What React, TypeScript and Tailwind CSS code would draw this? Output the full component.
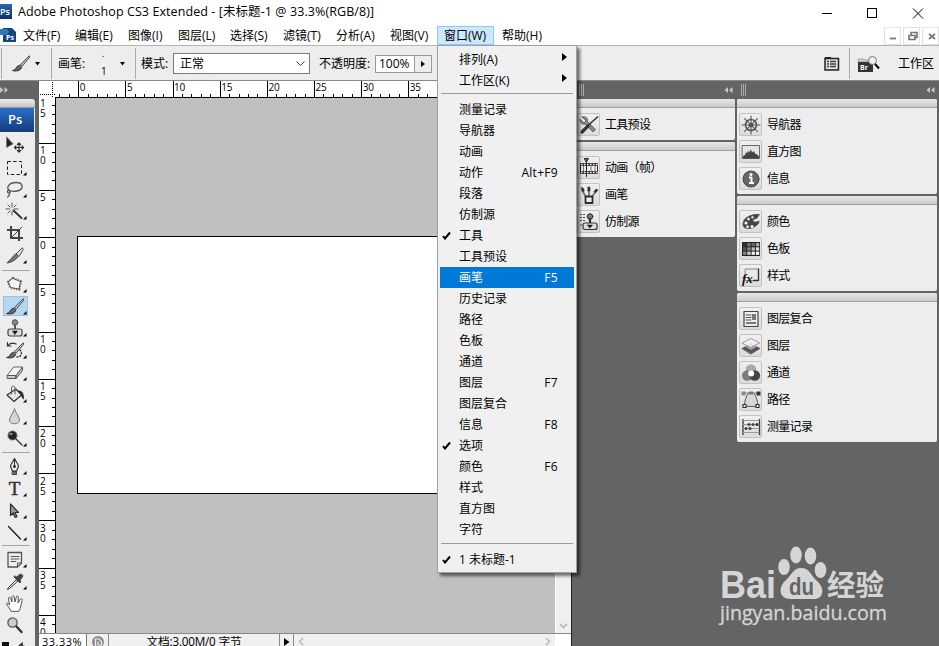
import type { FC, ReactNode } from "react";

type BoxProps = { children: ReactNode };

const Icon: FC<BoxProps> = ({ children }) => (
  <svg width="22" height="22" viewBox="0 0 22 22" fill="none" stroke="#2c2c2c" strokeLinecap="round" strokeLinejoin="round" className="block shrink-0">
    {children}
  </svg>
);

const brush = (
  <>
    <path d="M19 3l-8.500 8.500 1.700 1.700L19.500 4.500z" fill="#bbb" stroke="#444" strokeWidth=".9" />
    <path d="M9.500 12.300c-2 .3-2.700 1.500-3.700 3-.8 1.500-1.800 1.800-3.300 2.200 3 1 8.300.5 9.200-3z" fill="#666" stroke="#222" strokeWidth=".9" />
  </>
);

const tools: { name: string; corner?: boolean; icon: ReactNode }[] = [
  { name: "move", icon: <><path d="M2.500 2v10.500L9 9z" fill="#222" stroke="#777" strokeWidth=".7" /><path d="M15 8v9M10.500 12.500h9M13.500 9.500L15 8l1.500 1.500M13.500 15.500L15 17l1.500-1.500M12 11l-1.500 1.500L12 14M18 11l1.500 1.500L18 14" strokeWidth="1.200" /></> },
  { name: "marquee", corner: true, icon: <rect x="3.500" y="4.500" width="14" height="13" strokeDasharray="3.500 2.200" strokeLinecap="butt" stroke="#222" /> },
  { name: "lasso", corner: true, icon: <path d="M6 12C1 9 5 3.500 12 3.500c8 0 8 7 1 8.500-3.500.7-7-.3-8-1-2 0-2 3 0 3.200 2 .2 1-2.500 0-3M5 14.200c1 1 0 3-1.500 3.800" strokeWidth="1.300" stroke="#555" /> },
  { name: "wand", corner: true, icon: <><path d="M9.500 9.500l8 7.500" strokeWidth="1.900" stroke="#333" /><path d="M8 2v4M8 10.500v3.500M2 8h4M10 8h4M3.800 3.800L6 6M12.200 3.800L10 6M3.800 12.200L6 10" stroke="#555" /></> },
  { name: "crop", icon: <><path d="M7 3v12h12M3 7h12v11" strokeWidth="2" stroke="#444" strokeLinecap="butt" /><path d="M8 14L18 4" strokeWidth=".9" /></> },
  { name: "slice", corner: true, icon: <><path d="M18 3l-6 6 3 2.500L19 5z" fill="#ddd" strokeWidth=".8" /><path d="M11.500 9L3 18c4-.5 8-2.500 11-6z" fill="#777" strokeWidth=".8" /></> },
  { name: "patch", corner: true, icon: <><path d="M9 4.500l7.500 3L15 15l-8.500-1.500L4.500 8z" strokeWidth="3" strokeDasharray="1 1.500" stroke="#555" strokeLinecap="butt" /><path d="M9 4.500l7.500 3L15 15l-8.500-1.500L4.500 8z" strokeWidth="1" fill="#f5f5f5" stroke="#555" /></> },
  { name: "brush", corner: true, icon: brush },
  { name: "stamp", corner: true, icon: <><circle cx="11" cy="4.500" r="2.800" fill="#888" stroke="#555" /><path d="M11 7.500v4" strokeWidth="2" stroke="#555" /><rect x="4" y="11" width="14" height="7" rx="2" fill="#ddd" stroke="#444" strokeWidth="1.200" /><path d="M8.500 13h5L11 16.500z" fill="#111" strokeWidth=".5" /></> },
  { name: "history", corner: true, icon: <>{brush}<path d="M12 4C9 2.500 6 3 4 5.500M3.500 2.500V6H7" strokeWidth="1.200" /><path d="M16 10c3 3 1 7-3 7" strokeDasharray="1 2" strokeWidth="1.400" /></> },
  { name: "eraser", corner: true, icon: <><path d="M10 5h8.500L12 13.500H3.500z" fill="#f5f5f5" stroke="#666" /><path d="M3.500 13.500H12v3H3.500zM12 16.500l6.500-8V5L12 13.500z" fill="#ccc" stroke="#555" /></> },
  { name: "bucket", corner: true, icon: <><path d="M3 11l9-6 5.500 6-7.500 6.500z" fill="#e5e5e5" stroke="#333" strokeWidth="1.200" /><path d="M7.500 10V4C7.500 1.500 11 1.500 11 4v6" stroke="#555" /><path d="M14 7c4-.5 5.500 2 5.500 8-1.500-1-2-3-2-5z" fill="#222" strokeWidth=".8" /></> },
  { name: "blur", corner: true, icon: <path d="M10.500 3C9 7.500 5.500 11 5.500 14c0 5 10 5 10 0 0-3-3.500-6.500-5-11z" fill="#d5d5d5" stroke="#777" /> },
  { name: "dodge", corner: true, icon: <><circle cx="8.500" cy="7.500" r="4.500" fill="#222" stroke="#666" /><ellipse cx="7" cy="6" rx="1.700" ry="1.200" fill="#888" stroke="none" /><path d="M12 11l6 6" strokeWidth="1.300" /></> },
  { name: "pen", corner: true, icon: <><path d="M10.500 2.500C9 6 6.500 8 6.500 10.500L8.500 15h4l2-4.500c0-2.500-2.500-4.500-4-8z" fill="#eee" strokeWidth="1.100" /><path d="M10.500 3v7" /><circle cx="10.500" cy="10.500" r="1.100" fill="#222" /><rect x="8.500" y="15.500" width="4" height="3" fill="#666" strokeWidth=".8" /></> },
  { name: "type", corner: true, icon: <text x="10.500" y="17" textAnchor="middle" fontSize="19" fill="#333" stroke="#333" strokeWidth=".5" fontFamily="Liberation Serif, serif">T</text> },
  { name: "select", corner: true, icon: <path d="M6.500 4v11.500l2.700-2.500 2 4.500 1.800-.8-2-4.200h3.500z" fill="#999" strokeWidth="1.200" /> },
  { name: "line", corner: true, icon: <path d="M4.500 4.500l12 12.500" strokeWidth="1.200" stroke="#111" /> },
  { name: "note", corner: true, icon: <><path d="M4 3.500h13.500V14l-4 4H4z" fill="#eee" stroke="#555" strokeWidth="1.300" /><path d="M7 7.500h8M7 10h8M7 12.500h5M13.500 18v-4h4" stroke="#555" /></> },
  { name: "eyedropper", corner: true, icon: <><path d="M12 9l-7.500 7.500-1 2 2-1L13.500 10.500z" fill="#eee" strokeWidth="1" /><path d="M10 6l6 6 1-2-1-1 2.500-3c1-2-1-3.500-3-2.500L12.500 6l-1-1z" fill="#444" strokeWidth=".7" /></> },
  { name: "hand", icon: <path d="M7 18c-1-2-3-5-4.500-7 0-1.500 1.700-1 3 1L4.500 5c.6-1.500 1.900-.6 2.200.6L8 9V3.500c.8-1.500 2-.6 2.200.5L11 9l1.500-5.500c1-1 2-.3 1.800 1L14 10l2.500-4c1.200-.8 2 .2 1.700 1.200C17 11 17 15 15 18z" fill="#fff" stroke="#555" /> },
  { name: "zoom", icon: <><circle cx="8.500" cy="7.500" r="4.600" fill="#ccc" stroke="#555" strokeWidth="1.300" /><path d="M12.500 11.500l5 5.500" strokeWidth="2.400" stroke="#333" /></> },
];

const separators: Record<string, string> = {
  patch: "h-[7px] pt-[4px] pl-[2px]",
  pen: "h-[6px] pt-[3px] pl-[2px]",
  note: "h-[5px] pt-[2px] pl-[2px]",
};

const ToolBar = () => (
  <div className="flex h-full w-[39px] shrink-0 flex-col overflow-hidden bg-[#646464]">
    <div className="flex h-[18px] items-center">
      <svg width="10" height="8" className="block"><path d="M0 1l3.500 3L0 7zM4.500 1L8 4 4.500 7z" fill="#c4c4c4" /></svg>
    </div>
    <div className="h-[548px] w-[35px] overflow-hidden rounded-tr-sm bg-[#ededed]">
      <div className="h-[9px] border-b border-[#999] bg-linear-to-b from-[#eee] to-[#c4c4c4]" />
      <div className="flex h-[24px] w-[34px] items-center bg-linear-to-b from-[#2a70c8] to-[#173a7c] pl-[8px] text-[13px] font-semibold text-white">Ps</div>
      <div className="h-[2px]" />
      {tools.map((tool) => (
        <div key={tool.name}>
          {separators[tool.name] && (
            <div className={separators[tool.name]}>
              <div className="h-px w-[28px] bg-[#a4a4a4]" />
            </div>
          )}
          <div className="relative flex h-[22px] items-center pl-[3px]">
            <div className={tool.name === "brush" ? "h-[20px] w-[25px] bg-[#b5d7f3] outline outline-[#9dbfe0] -outline-offset-1" : "h-[20px] w-[25px]"}>
              <div className="ml-px"><Icon>{tool.icon}</Icon></div>
            </div>
            {tool.corner && (
              <svg width="4" height="4" className="absolute bottom-[2px] left-[23px]"><path d="M3.500 0v3.500H0z" fill="#000" /></svg>
            )}
          </div>
        </div>
      ))}
      <svg width="34" height="12" className="mt-[6px] block"><path d="M2 0h7v7H2z" fill="#111" /><path d="M7 4h5v4H7z" fill="#555" /><path d="M19 4l3-2.500V4c3 0 4 1 4 4" fill="none" stroke="#222" strokeWidth="1.500" /></svg>
    </div>
  </div>
);

const hLabels = [0, 5, 10, 15, 20, 25, 30, 35];
const vLabels = ["15", "10", "5", "0", "5", "10", "15", "20", "25", "30", "35", "40"];

const TopRuler = () => (
  <svg width="532" height="17" className="block shrink-0 bg-white" shapeRendering="crispEdges">
    <path d="M13.500 1v16M1 13.500h16" stroke="#000" strokeDasharray="1 1" />
    <path d="M16 16.500h516" stroke="#000" />
    {Array.from({ length: 44 }, (_, i) => {
      const x = Math.round(20.400 + i * 9.430) + 0.5;
      return <path key={i} d={`M${x} ${i % 5 === 2 ? 0 : 13}V17`} stroke="#000" />;
    })}
    {hLabels.map((n, i) => (
      <text key={n} x={40.800 + i * 47.150} y="10" fontSize="10" fill="#000" letterSpacing="-0.200">{n}</text>
    ))}
  </svg>
);

const SideRuler = () => (
  <svg width="17" height="535" className="block shrink-0 bg-white" shapeRendering="crispEdges">
    <path d="M16.500 0v535" stroke="#000" />
    {Array.from({ length: 57 }, (_, i) => {
      const y = Math.round(-2.500 + i * 9.440) + 0.5;
      return <path key={i} d={`M${i % 5 === 0 ? 0 : 13} ${y}H17`} stroke="#000" />;
    })}
    {vLabels.map((label, i) =>
      label.split("").map((c, j) => (
        <text key={`${i}-${j}`} x="1" y={9 + i * 47.200 + j * 10} fontSize="10" fill="#000">{c}</text>
      ))
    )}
  </svg>
);

const Document = () => (
  <div className="flex w-[532px] shrink-0 flex-col bg-[#c0c0c0]">
    <TopRuler />
    <div className="flex h-[535px]">
      <SideRuler />
      <div className="flex-1 overflow-hidden pt-[138px] pl-[21px]">
        <div className="h-[258px] w-[600px] border border-black bg-white" />
      </div>
      <div className="flex w-[16px] items-end justify-center border-l border-white bg-[#f0f0f0] pb-[4px]">
        <svg width="9" height="6"><path d="M1 1l3.500 3.500L8 1" fill="none" stroke="#bbb" strokeWidth="1.800" /></svg>
      </div>
    </div>
    <div className="flex h-[16px] items-center border-t border-[#888] bg-[#f0f0f0]">
      <div className="flex h-full w-[48px] items-center border-r border-[#777] bg-white pt-[2px] pl-[3px] text-[11px] tracking-[0.500px]">33.33%</div>
      <div className="flex h-full w-[22px] items-center justify-center border-r border-[#888]">
        <svg width="14" height="14" viewBox="0 0 14 14"><circle cx="7" cy="7" r="6" fill="#8c8c8c" /><path d="M4.500 11V4h3.500l2.500 2.500V10H7V6.500" fill="none" stroke="#eee" strokeWidth="1.200" /></svg>
      </div>
      <div className="flex h-full w-[171px] items-center justify-center border-r border-[#888] text-[11.700px] tracking-[-0.200px] whitespace-pre">文档:3.00M/0 字节</div>
      <div className="flex h-full w-[14px] items-center justify-center border-r border-[#888]">
        <svg width="6" height="8"><path d="M0 0l5.500 4L0 8z" fill="#000" /></svg>
      </div>
      <div className="flex flex-1 items-center justify-between px-[4px]">
        <svg width="6" height="9"><path d="M5 1L1.500 4.500 5 8" fill="none" stroke="#bbb" strokeWidth="1.600" /></svg>
        <svg width="6" height="9"><path d="M1 1l3.500 3.500L1 8" fill="none" stroke="#bbb" strokeWidth="1.600" /></svg>
      </div>
      <div className="h-full w-[16px] bg-white" />
    </div>
  </div>
);

const panelIcons: Record<string, ReactNode> = {
  工具预设: <><path d="M4 3l4 4-2 2-4-4c0 4 2 6 5 5l8 8 2.500-2.500-8-8C10 4 8 2 4 3z" fill="#888" stroke="#555" strokeWidth=".8" /><path d="M19.500 3L11 10.500" strokeWidth="1.500" /><path d="M10 12l-6 6" strokeWidth="3.200" stroke="#333" /></>,
  "动画（帧）": <><path d="M2 6h18v11H2z" fill="#333" stroke="none" /><path d="M3 9h16v5H3z" fill="#eee" stroke="none" /><path d="M3 7.500h17M3 15.500h17" stroke="#fff" strokeWidth="1.400" strokeDasharray="1.500 1.500" strokeLinecap="butt" /><path d="M5.500 9v5M13 9v5M17 9v5" stroke="#777" /><path d="M8.500 2.500v17" stroke="#222" /><path d="M6.500 1.500h4L8.500 5z" fill="#555" /></>,
  画笔: <><path d="M8 13L4.500 7M11 13V6M14 13l4-6" strokeWidth="1.800" stroke="#777" /><path d="M3.500 3.500c2.500 0 3 2.500 2.500 4L4 7zM10 3h2v4h-2zM16 7.500l2-2.500 2 1-2 2.500z" fill="#333" strokeWidth=".6" /><path d="M7.500 12.500h7V19h-7z" fill="#eee" strokeWidth="1.800" /></>,
  仿制源: <><path d="M2 3.500h6M2 6.500h6M2 9.500h6M2 14h2" stroke="#555" strokeDasharray="2 1" strokeLinecap="butt" /><circle cx="12" cy="5.500" r="2.800" fill="#777" /><path d="M12 8v4" strokeWidth="2.200" /><rect x="5" y="12" width="14" height="6.500" rx="2" fill="#ddd" stroke="#333" strokeWidth="1.200" /><path d="M9.500 14h5L12 17z" fill="#111" strokeWidth=".5" /></>,
  导航器: <><circle cx="11" cy="11" r="5.500" stroke="#555" strokeWidth="1.600" /><circle cx="11" cy="11" r="1.800" fill="#444" stroke="#444" /><path d="M11 2v18M2 11h18M4.600 4.600l12.800 12.800M17.400 4.600L4.600 17.400" stroke="#555" strokeWidth="1.100" /></>,
  直方图: <><rect x="2.500" y="4.500" width="17" height="13" fill="#e5e5e5" stroke="#666" /><path d="M3 17.500V15l2-1 1-3 1 1.500 1-3 1 2 2-3 1 3 2-1.500 1 2.500 2 1 2 2v2z" fill="#444" stroke="none" /></>,
  信息: <><circle cx="11" cy="11" r="8" fill="#666" stroke="#444" /><path d="M9 9.500h2.500V15M9 15h5" stroke="#fff" strokeWidth="2" strokeLinecap="butt" /><circle cx="11" cy="6.500" r="1.500" fill="#fff" stroke="none" /></>,
  颜色: <><path d="M19 3.500C16 2.500 3 5 3 13c0 6 8 5 11 3 3-2 5-3 5-6-2 1-4 2-6 0-1-2 3-2 4-3z" fill="#444" stroke="#555" /><circle cx="6" cy="12" r="1.500" fill="#fff" stroke="none" /><circle cx="7.500" cy="15.700" r="1.500" fill="#ddd" stroke="none" /><circle cx="8.500" cy="8" r="1.500" fill="#ddd" stroke="none" /><circle cx="12" cy="15.500" r="1.500" fill="#fff" stroke="none" /><circle cx="12.500" cy="6.200" r="1.200" fill="#ddd" stroke="none" /></>,
  色板: <><rect x="2" y="4" width="18" height="14" fill="#222" stroke="none" />{[0, 1, 2, 3, 4, 5, 6, 7, 8, 9, 10, 11].map((n) => <rect key={n} x={3 + (n % 4) * 4.300} y={5 + Math.floor(n / 4) * 4.300} width="3.300" height="3.300" stroke="none" fill={["#333", "#777", "#666", "#aaa", "#555", "#888", "#bbb", "#ddd", "#888", "#ccc", "#eee", "#fff"][n]} />)}</>,
  样式: <><path d="M5.500 4h13v11.500h-13z" fill="#e9e9e9" stroke="#888" /><path d="M18.500 4v11.500h-5" stroke="#333" strokeWidth="1.400" /><text x="2" y="18" fontSize="13" fontWeight="bold" fontStyle="italic" fontFamily="Liberation Serif, serif" fill="#111" stroke="none">fx</text></>,
  图层复合: <><rect x="4" y="3.500" width="14" height="15" fill="#eee" stroke="#444" strokeWidth="1.200" /><path d="M6 7h5M6 9.500h5M6 12h5" stroke="#555" /><path d="M12 6h4v6h-4zM6 14h10v2H6z" fill="#777" stroke="none" /></>,
  图层: <><path d="M2 13.500l9-5 9 5-9 5.500z" fill="#555" stroke="#444" strokeWidth=".5" /><path d="M5 11.500l6-3.500 6 3.500-6 3.500z" fill="#aaa" stroke="none" /><path d="M2.500 8L11 3.500 19.500 8 11 12.500z" fill="#f5f5f5" fillOpacity=".75" stroke="#888" strokeWidth=".8" /></>,
  通道: <><circle cx="11" cy="7.500" r="5.300" fill="#aaa" stroke="none" /><circle cx="7.300" cy="13.500" r="5.300" fill="#7c7c7c" stroke="none" /><circle cx="14.800" cy="13.500" r="5.300" fill="#444" stroke="none" /><circle cx="11.200" cy="11.500" r="3" fill="#fff" stroke="none" /></>,
  路径: <><path d="M4 17C5 12 6 7 8.500 4h5c3 3 4 8 4.500 13z" fill="#d8d8d8" stroke="#555" /><path d="M3 4h16" stroke="#888" /><path d="M1.500 2.500h4v4h-4z" fill="#888" stroke="none" /><path d="M9 2.500h4v3H9z" fill="#777" stroke="none" /><path d="M16.500 2.500h4v4h-4z" fill="#333" stroke="none" /><path d="M3 15.500h3v3H3zM16 15.500h3v3h-3z" fill="#fff" strokeWidth="1.200" /></>,
  测量记录: <><path d="M3 3v16M19.500 3v16" stroke="#333" strokeWidth="1.300" strokeLinecap="butt" /><path d="M3 4.500h16M3 8.500h16M3 12.500h16M3 16.500h16" stroke="#999" /><circle cx="9" cy="8.500" r="1.500" fill="#444" stroke="none" /><circle cx="13" cy="8.500" r="1.500" fill="#444" stroke="none" /><circle cx="17" cy="8.500" r="1.500" fill="#333" stroke="none" /><circle cx="6" cy="12.500" r="1.500" fill="#444" stroke="none" /><circle cx="10" cy="12.500" r="1.500" fill="#444" stroke="none" /></>,
};

const Panel: FC<{ items: string[]; className?: string }> = ({ items, className }) => (
  <div className={`overflow-hidden rounded-xs bg-[#ededed] ${className}`}>
    <div className="h-[9px] border-b border-[#a0a0a0] bg-linear-to-b from-[#e8e8e8] to-[#cacaca]" />
    <div className="flex flex-col gap-[4px] pt-[5px] pl-[2px]">
      {items.map((item) => (
        <div key={item} className="flex h-[23px] items-center gap-[5px]">
          <div className="flex size-[23px] shrink-0 items-center justify-center rounded-xs border border-[#c2c2c2] bg-linear-to-b from-[#f0f0f0] to-[#dcdcdc]">
            <Icon>{panelIcons[item]}</Icon>
          </div>
          <span className="text-[12px] tracking-[-0.7px] whitespace-nowrap">{item}</span>
        </div>
      ))}
    </div>
  </div>
);

const DockHeader = () => (
  <div className="flex h-[18px] items-center justify-between bg-[#646464] pr-[2px] pl-[4px]">
    <div className="flex gap-px">
      <div className="h-[12px] w-px bg-[#aaa]" />
      <div className="h-[12px] w-px bg-[#aaa]" />
      <div className="h-[12px] w-px bg-[#aaa]" />
    </div>
    <svg width="9" height="8"><path d="M4 1L.5 4 4 7zM8.500 1L5 4l3.500 3z" fill="#c8c8c8" /></svg>
  </div>
);

const Watermark = () => (
  <svg width="180" height="90" className="absolute top-[542px] left-[714px]" fill="#d5d5d5">
    <text x="6" y="56" fontSize="38" fontWeight="bold" fontFamily="Liberation Sans, sans-serif" textLength="56" lengthAdjust="spacingAndGlyphs">Bai</text>
    <ellipse cx="70" cy="25" rx="5.800" ry="8" />
    <ellipse cx="82" cy="13" rx="5.800" ry="8.500" />
    <ellipse cx="96.500" cy="14" rx="5.800" ry="8.500" />
    <ellipse cx="106.500" cy="28" rx="5.800" ry="8" />
    <path d="M87 26c9 0 10 8 16 13 9 8 6 19-4 18H77c-12 0-13-11-6-18 7-6 8-13 16-13z" />
    <text x="75" y="53" fontSize="23" fontWeight="bold" fill="#646464" fontFamily="Liberation Sans, sans-serif" textLength="25" lengthAdjust="spacingAndGlyphs">du</text>
    <text x="113" y="54" fontSize="29" fontWeight="bold" fontFamily="Noto Sans CJK SC, sans-serif" textLength="57" lengthAdjust="spacingAndGlyphs">经验</text>
    <text x="6" y="78" fontSize="20" stroke="#d5d5d5" strokeWidth=".3" fontFamily="Open Sans, sans-serif" textLength="167" lengthAdjust="spacingAndGlyphs">jingyan.baidu.com</text>
  </svg>
);

const windowMenu = [
  { label: "测量记录" },
  { label: "导航器" },
  { label: "动画" },
  { label: "动作", hotkey: "Alt+F9" },
  { label: "段落" },
  { label: "仿制源" },
  { label: "工具", checked: true },
  { label: "工具预设" },
  { label: "画笔", hotkey: "F5", active: true },
  { label: "历史记录" },
  { label: "路径" },
  { label: "色板" },
  { label: "通道" },
  { label: "图层", hotkey: "F7" },
  { label: "图层复合" },
  { label: "信息", hotkey: "F8" },
  { label: "选项", checked: true },
  { label: "颜色", hotkey: "F6" },
  { label: "样式" },
  { label: "直方图" },
  { label: "字符" },
];

type RowProps = { label: string; hotkey?: string; checked?: boolean; active?: boolean; sub?: boolean };

const MenuRow: FC<RowProps> = ({ label, hotkey, checked, active, sub }) => (
  <div className={`flex h-[21px] items-center pr-[16px] text-[12px] ${active ? "bg-[#0078d7] text-white" : ""}`}>
    <div className="w-[19px] shrink-0 pl-[2px]">
      {checked && <svg width="9" height="9"><path d="M1 5l2 2.500L8 1.500" fill="none" stroke="#000" strokeWidth="2" /></svg>}
    </div>
    <span className="whitespace-nowrap">{label}</span>
    <span className="ml-auto tracking-[0.300px]">{hotkey}</span>
    {sub && <svg width="5" height="8" className="-mr-[9px] mb-[6px]"><path d="M0 0l5 4-5 4z" fill="#000" /></svg>}
  </div>
);

const WindowMenu = () => (
  <div className="absolute top-[45px] left-[437px] h-[528px] w-[140px] border border-[#a0a0a0] bg-[#f0f0f0] px-[2px] pt-[3px] shadow-[3px_3px_3px_rgba(0,0,0,0.55)]">
    <MenuRow label="排列(A)" sub />
    <MenuRow label="工作区(K)" sub />
    <div className="mx-[1px] mt-[2px] mb-[5px] h-px bg-[#9a9a9a]" />
    {windowMenu.map((row) => (
      <MenuRow key={row.label} {...row} />
    ))}
    <div className="mx-[1px] mt-[3px] mb-[5px] h-px bg-[#9a9a9a]" />
    <MenuRow label="1 未标题-1" checked />
  </div>
);

const TitleBar = () => (
  <div className="flex h-[25px] items-center bg-white">
    <div className="mb-[2px] flex h-[15px] w-[12px] items-center bg-linear-to-b from-[#2b67b5] to-[#0d2f66] text-[9px] font-semibold text-white">Ps</div>
    <div className="ml-[6px] text-[12.500px] tracking-[0.080px] whitespace-nowrap">Adobe Photoshop CS3 Extended - [未标题-1 @ 33.3%(RGB/8)]</div>
    <svg width="117" height="24" className="ml-auto block" fill="none" stroke="#000" shapeRendering="crispEdges">
      <path d="M0 12.500h10M45.500 7.500h9v9h-9z" />
      <path d="M91 7.500l10 10M101 7.500l-10 10" shapeRendering="auto" />
    </svg>
  </div>
);

const menus = [
  { label: "文件(F)", width: "w-[52px]" },
  { label: "编辑(E)", width: "w-[53px]" },
  { label: "图像(I)", width: "w-[50px]" },
  { label: "图层(L)", width: "w-[52px]" },
  { label: "选择(S)", width: "w-[53px]" },
  { label: "滤镜(T)", width: "w-[53px]" },
  { label: "分析(A)", width: "w-[54px]" },
  { label: "视图(V)", width: "w-[47px]" },
  { label: "窗口(W)", width: "w-[57px] h-[19px] pl-[6px] border border-[#90c8f6] bg-[#cce8ff]" },
  { label: "帮助(H)", width: "w-[60px] pl-[8px]" },
];

const MenuBar = () => (
  <div className="flex h-[20px] items-center bg-white pt-px text-[12px]">
    <svg width="17" height="17" className="mr-[6px]">
      <path d="M3 1h9l4 4v10H3z" fill="#174481" />
      <path d="M0 2h7l2 3-2 3H0z" fill="#2f77c3" />
      <text x="6" y="13" fontSize="7" fontWeight="bold" fill="#fff">Ps</text>
    </svg>
    {menus.map((menu) => (
      <div key={menu.label} className={`flex shrink-0 items-center whitespace-nowrap ${menu.width}`}>{menu.label}</div>
    ))}
    <div className="mt-px ml-auto flex gap-[2px]">
      {["M5 10.500h6", "M5 7.500h6v4H5zM7 7V4.500h6v5h-2", "M6 6l6 5M12 6l-6 5"].map((d) => (
        <svg key={d} width="17" height="18" className="border border-[#e2e2e2]"><path d={d} fill="none" stroke="#6d7985" strokeWidth="1.700" /></svg>
      ))}
    </div>
  </div>
);

const Divider = () => <div className="h-[31px] w-px bg-[#aaa]" />;
const Caret = () => <svg width="5" height="4" className="block"><path d="M0 0h5L2.500 3.500z" fill="#000" /></svg>;

const OptionsBar = () => (
  <div className="flex h-[36px] items-center border-t border-b border-t-[#b5b5b5] border-b-[#8a8a8a] bg-[#ededed] pt-px text-[12px]">
    <div className="w-px" />
    <Divider />
    <div className="flex w-[49px] items-center gap-[3px] pl-[8px]"><Icon>{brush}</Icon><Caret /></div>
    <Divider />
    <span className="ml-[6px] w-[43px]">画笔:</span>
    <div className="flex h-[24px] w-[19px] flex-col justify-between leading-none">
      <span className="pl-[1px] text-[9px] leading-[4px]">.</span>
      <span className="text-[10px] leading-[9px]">1</span>
    </div>
    <Caret />
    <div className="ml-[10px]"><Divider /></div>
    <span className="ml-[5px] w-[32px] whitespace-nowrap">模式:</span>
    <div className="flex h-[21px] w-[137px] items-center justify-between border border-[#7a7a7a] bg-white pr-[4px] pl-[6px]">
      正常
      <svg width="9" height="6"><path d="M.5 .5l4 4 4-4" fill="none" stroke="#444" /></svg>
    </div>
    <span className="ml-[9px] w-[56px] whitespace-nowrap">不透明度:</span>
    <div className="flex h-[18px] w-[57px] items-center border border-[#999] bg-white pl-[3px]">
      <span className="w-[35px]">100%</span>
      <div className="flex h-full flex-1 items-center justify-center border-l border-[#999] bg-[#ededed]">
        <svg width="4" height="6"><path d="M0 0l4 3-4 3z" fill="#000" /></svg>
      </div>
    </div>
    <div className="ml-auto flex items-center">
      <svg width="16" height="16" className="mr-[9px] block">
        <path d="M1 2.500h13.500V14H1z" fill="#ddd" stroke="#222" strokeWidth="1.500" />
        <path d="M1 1h6v2H1z" fill="#222" />
        <path d="M3 5.500h2M3 8h2M3 10.500h2M6 5.500h6M6 8h6M6 10.500h6" stroke="#444" strokeWidth="1.300" />
      </svg>
      <Divider />
      <svg width="23" height="18" className="ml-[7px] block">
        <path d="M1 4h6l1 1h8v2H1z" fill="#ccc" stroke="#888" strokeWidth=".6" />
        <path d="M1 7h15v10H1z" fill="#333" />
        <text x="3" y="15" fontSize="7" fontWeight="bold" fill="#fff">Br</text>
        <circle cx="15.500" cy="5.500" r="4" fill="#eee" stroke="#777" />
        <path d="M18 9l4 4.500" stroke="#000" strokeWidth="2" />
      </svg>
      <span className="ml-[18px] w-[41px] whitespace-nowrap">工作区</span>
    </div>
  </div>
);

export default function App() {
  return (
    <div className="relative flex h-[646px] w-[939px] flex-col overflow-hidden bg-[#646464] font-['Open_Sans','Noto_Sans_CJK_SC',sans-serif] text-black">
      <TitleBar />
      <MenuBar />
      <OptionsBar />
      <div className="flex h-[565px]">
        <ToolBar />
        <Document />
        <div className="flex w-[164px] shrink-0 flex-col border-l border-[#222]">
          <div className="pl-[3px]"><DockHeader /></div>
          <Panel items={["工具预设"]} className="ml-[3px] h-[41px]" />
          <Panel items={["动画（帧）", "画笔", "仿制源"]} className="mt-[2px] ml-[3px] h-[95px]" />
        </div>
        <div className="ml-[2px] w-[200px] shrink-0">
          <DockHeader />
          <Panel items={["导航器", "直方图", "信息"]} className="h-[95px]" />
          <Panel items={["颜色", "色板", "样式"]} className="mt-[2px] h-[95px]" />
          <Panel items={["图层复合", "图层", "通道", "路径", "测量记录"]} className="mt-[2px] h-[149px]" />
        </div>
      </div>
      <WindowMenu />
      <Watermark />
    </div>
  );
}
